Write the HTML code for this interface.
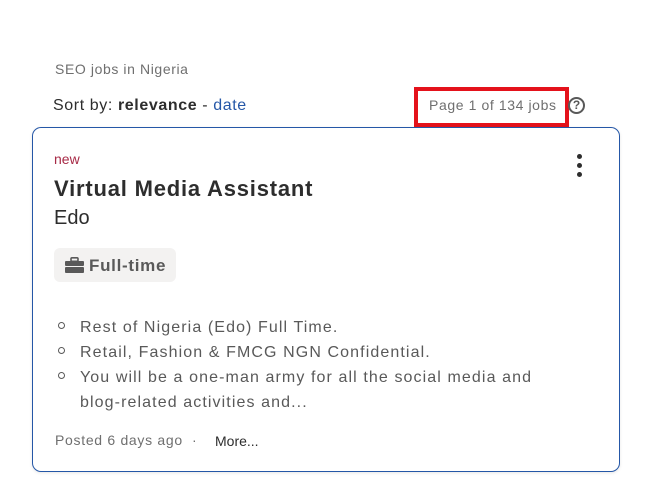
<!DOCTYPE html>
<html><head><style>
*{margin:0;padding:0;box-sizing:border-box}
body{width:668px;height:491px;background:#fff;font-family:"Liberation Sans",sans-serif;position:relative;overflow:hidden;color:#2d2d2d}
.a{position:absolute;white-space:nowrap}
</style></head><body>
<div class="a" style="left:55px;top:61px;font-size:14px;color:#6f6f6f;letter-spacing:0.6px">SEO jobs in Nigeria</div>
<div class="a" style="left:53px;top:97px;font-size:16px;color:#2d2d2d;letter-spacing:0.6px">Sort by: <b>relevance</b> - <span style="color:#2557a7">date</span></div>
<div class="a" style="left:414px;top:87px;width:155px;height:40px;border:4px solid #e4121b"></div>
<div class="a" style="left:429px;top:97px;font-size:14px;color:#6f6f6f;letter-spacing:0.6px">Page 1 of 134 jobs</div>
<div class="a" style="left:568px;top:97px;width:17px;height:17px;border:2px solid #595959;border-radius:50%;font-size:12px;font-weight:bold;color:#595959;text-align:center;line-height:13px">?</div>
<div class="a" style="left:32px;top:127px;width:588px;height:345px;border:1px solid #2557a7;border-radius:9px;box-shadow:0 1px 3px rgba(0,0,0,.1)"></div>
<div class="a" style="left:577px;top:154px;width:5px;height:5px;border-radius:50%;background:#2d2d2d;box-shadow:0 9px 0 #2d2d2d,0 18px 0 #2d2d2d"></div>
<div class="a" style="left:54px;top:151px;font-size:14px;color:#a72a46">new</div>
<div class="a" style="left:54px;top:176px;font-size:22px;font-weight:bold;letter-spacing:0.8px">Virtual Media Assistant</div>
<div class="a" style="left:54px;top:207px;font-size:20px">Edo</div>
<div class="a" style="left:54px;top:248px;width:122px;height:34px;background:#f3f2f1;border-radius:6px"></div>
<svg class="a" style="left:65px;top:257px" width="19" height="16" viewBox="0 0 19 16"><rect x="6" y="0.8" width="7" height="3.5" rx="1" fill="none" stroke="#595959" stroke-width="1.6"/><rect x="0" y="4" width="19" height="5" rx="1" fill="#595959"/><rect x="0" y="10" width="19" height="6" rx="1" fill="#595959"/></svg>
<div class="a" style="left:89px;top:256px;font-size:17px;font-weight:bold;color:#595959;letter-spacing:0.7px">Full-time</div>
<div class="a" style="left:80px;top:315px;font-size:16px;color:#595959;line-height:25px;letter-spacing:1.1px">Rest of Nigeria (Edo) Full Time.<br>Retail, Fashion &amp; FMCG NGN Confidential.<br>You will be a one-man army for all the social media and<br>blog-related activities and...</div>
<div class="a" style="left:58px;top:322px;width:7px;height:7px;border:1.3px solid #595959;border-radius:50%"></div>
<div class="a" style="left:58px;top:347px;width:7px;height:7px;border:1.3px solid #595959;border-radius:50%"></div>
<div class="a" style="left:58px;top:372px;width:7px;height:7px;border:1.3px solid #595959;border-radius:50%"></div>
<div class="a" style="left:55px;top:432px;font-size:14px;color:#6f6f6f;letter-spacing:0.7px">Posted 6 days ago &nbsp;·</div>
<div class="a" style="left:215px;top:433px;font-size:14px;color:#2d2d2d">More...</div>
</body></html>
